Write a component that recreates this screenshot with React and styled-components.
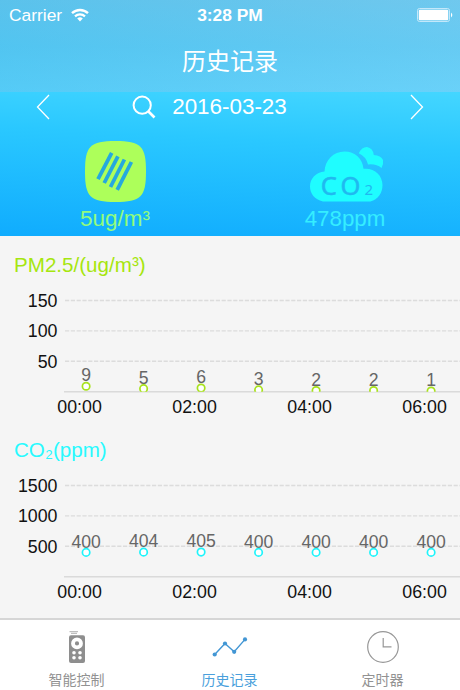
import React from "react";
import styled, { createGlobalStyle } from "styled-components";

const GlobalStyle = createGlobalStyle`
  * {
    box-sizing: border-box;
  }

  body {
    margin: 0;
    font-family: "Liberation Sans", "Noto Sans CJK SC", sans-serif;
  }

  svg {
    flex-shrink: 0;
  }
`;

const TIMES = ["00:00", "02:00", "04:00", "06:00"];

const PM_READINGS = [9, 5, 6, 3, 2, 2, 1];
const CO2_READINGS = [400, 404, 405, 400, 400, 400, 400];

const SearchIcon = () => (
  <svg width="24" height="24" viewBox="0 0 24 24" fill="none" stroke="#fff">
    <circle cx="10.2" cy="10.2" r="8.6" strokeWidth="2" />
    <path d="M16.5 16.5L22.5 22.5" strokeWidth="2.6" />
  </svg>
);

const Chevron = ({ points }) => (
  <svg width="14" height="26" viewBox="0 0 14 26" fill="none" stroke="#fff">
    <polyline points={points} strokeWidth="1.3" />
  </svg>
);

const WifiIcon = () => (
  <svg width="18" height="14" viewBox="0 0 18 14" fill="none" stroke="#fff">
    <path d="M1 5.2A11.6 11.6 0 0 1 17 5.2" strokeWidth="2.4" />
    <path d="M4 8.4A7.2 7.2 0 0 1 14 8.4" strokeWidth="2.2" />
    <path d="M9 13.6L6.2 10.6A4 4 0 0 1 11.8 10.6Z" fill="#fff" stroke="none" />
  </svg>
);

const BatteryIcon = () => (
  <svg width="36" height="14" viewBox="0 0 36 14">
    <rect x="0.5" y="0.5" width="32" height="13" rx="2" fill="none" stroke="#c4e8fa" />
    <rect x="1.8" y="1.8" width="29.4" height="10.4" rx="1" fill="#fff" />
    <path d="M34 4.6Q36.6 7 34 9.4Z" fill="#fff" />
  </svg>
);

const DustIcon = () => (
  <svg width="61" height="61" viewBox="0 0 61 61">
    <path
      d="M0 30.5C0 5 5 0 30.5 0S61 5 61 30.5S56 61 30.5 61S0 56 0 30.5Z"
      fill="#adff5a"
    />
    <g fill="none" stroke="#25a9de" strokeWidth="3.8">
      <path d="M26.7 11.8L13 38.2" />
      <path d="M32.9 15.3L19.2 42" />
      <path d="M39.4 18.5L25.5 46" />
      <path d="M46.4 21L32.2 48.8" />
    </g>
  </svg>
);

const CloudIcon = () => (
  <svg width="74" height="56" viewBox="0 0 74 56">
    <g fill="#1ffdff">
      <path d="M13 55.5C4.5 53.5 0 47.5 0 40.5C0 32.5 6 26.5 14.5 25.6C15 14 23.5 5.5 34.5 5.5C45 5.5 52.5 12.5 53.5 22.8C64 21.5 72.5 29 72.5 39C72.5 47 68 53.5 60.5 55.5Z" />
      <path d="M48.7 7.3Q52 0.8 57 1Q63 2 63.8 9Q71 9.5 73 14Q73.8 18 71.5 22Q66 17.5 58 18.5Q56 10.5 48.7 7.3Z" />
    </g>
    <g fill="#20b9f0" fontFamily="Noto Sans, sans-serif">
      <g fontSize="25.5" stroke="#20b9f0" strokeWidth="0.5">
        <text x="10.7" y="48.6">C</text>
        <text x="30.6" y="48.6">O</text>
      </g>
      <text x="54.5" y="48.6" fontSize="15">2</text>
    </g>
  </svg>
);

const RemoteIcon = () => (
  <svg width="34" height="34" viewBox="0 0 34 34">
    <path d="M9.5 1.7H18M11 3.3H17" stroke="#b0b0b0" />
    <rect x="9" y="5.3" width="16" height="27.7" rx="2" fill="#8e8e8e" />
    <circle cx="17" cy="13.4" r="4" fill="none" stroke="#fff" strokeWidth="3.8" />
    <g fill="#fff">
      <circle cx="14" cy="22.8" r="1.8" />
      <circle cx="20" cy="22.8" r="1.8" />
      <circle cx="14" cy="27.8" r="1.8" />
      <circle cx="20" cy="27.8" r="1.8" />
    </g>
  </svg>
);

const TrendIcon = () => (
  <svg width="36" height="34" viewBox="0 0 36 34">
    <polyline
      points="2.7,24.5 13,13.5 22.2,21.8 33,9.4"
      fill="none"
      stroke="#4296d4"
      strokeWidth="1.4"
    />
    <g fill="#4296d4">
      <circle cx="2.7" cy="24.5" r="2.1" />
      <circle cx="13" cy="13.5" r="2.1" />
      <circle cx="22.2" cy="21.8" r="2.1" />
      <circle cx="33" cy="9.4" r="2.1" />
    </g>
  </svg>
);

const ClockIcon = () => (
  <svg width="34" height="34" viewBox="0 0 34 34" fill="none" stroke="#979797">
    <circle cx="17" cy="17" r="15.3" strokeWidth="1.2" />
    <path d="M17.2 8V16.8H25.5" strokeWidth="1.2" />
  </svg>
);

/**
 * Renders one history chart: gridlines, markers, values and the time axis.
 * @param {Number[]} readings - hourly values
 * @param {Number} step - value between two gridlines
 * @param {String} color - marker colour
 * @param {String} id - id of the clip path that cuts markers at the axis
 */
const Chart = ({ readings, step, color, id }) => {
  const rowHeight = 30.4;
  const base = 101.7;
  const pointX = i => 86.1 + i * 57.5;
  const pointY = value => base - (value / step) * rowHeight;

  return (
    <ChartSvg viewBox="0 0 460 130">
      <clipPath id={id}>
        <rect x="0" y="0" width="460" height={base} />
      </clipPath>
      {[1, 2, 3].map(n => (
        <g key={n}>
          <GridLine x1="65" x2="460" y1={base - n * rowHeight} y2={base - n * rowHeight} />
          <AxisText x="57.5" y={base - n * rowHeight + 6.5} textAnchor="end">
            {n * step}
          </AxisText>
        </g>
      ))}
      <BaseLine x1="64" x2="460" y1={base} y2={base} />
      {readings.map((value, i) => (
        <ValueText key={i} x={pointX(i)} y={pointY(value) - 4.8} textAnchor="middle">
          {value}
        </ValueText>
      ))}
      <g clipPath={`url(#${id})`}>
        {readings.map((value, i) => (
          <Marker key={i} cx={pointX(i)} cy={pointY(value)} r="3.7" stroke={color} />
        ))}
      </g>
      {TIMES.map((time, i) => (
        <AxisText key={time} x={pointX(i * 2) - 6.5} y="122.6" textAnchor="middle">
          {time}
        </AxisText>
      ))}
    </ChartSvg>
  );
};

const App = () => (
  <Screen>
    <GlobalStyle />
    <Header>
      <StatusBar>
        <Carrier>
          Carrier <WifiIcon />
        </Carrier>
        <Clock>3:28 PM</Clock>
        <Battery>
          <BatteryIcon />
        </Battery>
      </StatusBar>
      <Title>历史记录</Title>
    </Header>
    <Hero>
      <DateBar>
        <Chevron points="13,1 1.5,13 13,25" />
        <DateLabel>
          <SearchIcon />
          2016-03-23
        </DateLabel>
        <Chevron points="1,1 12.5,13 1,25" />
      </DateBar>
      <Metrics>
        <Metric>
          <DustIcon />
          <MetricValue color="#93fc7c" size="22.5px">5ug/m³</MetricValue>
        </Metric>
        <Metric>
          <CloudSlot>
            <CloudIcon />
          </CloudSlot>
          <MetricValue color="#35edff" size="22.3px">478ppm</MetricValue>
        </Metric>
      </Metrics>
    </Hero>
    <History>
      <Section>
        <SectionTitle color="#a6e60f">PM2.5/(ug/m³)</SectionTitle>
        <Chart id="pm" readings={PM_READINGS} step={50} color="#a8e21c" />
      </Section>
      <Section>
        <SectionTitle color="#28faff">CO₂(ppm)</SectionTitle>
        <Chart id="co2" readings={CO2_READINGS} step={500} color="#1ff4fb" />
      </Section>
    </History>
    <TabBar>
      <Tab>
        <RemoteIcon />
        智能控制
      </Tab>
      <Tab $active>
        <TrendIcon />
        历史记录
      </Tab>
      <Tab>
        <ClockIcon />
        定时器
      </Tab>
    </TabBar>
  </Screen>
);

const Screen = styled.div`
  display: flex;
  flex-direction: column;
  width: 460px;
  height: 690px;
  overflow: hidden;
  background: #f5f5f5;
`;

const Header = styled.header`
  height: 92px;
  color: #fff;
  background: linear-gradient(to right, rgba(60, 190, 238, 0.35), rgba(120, 208, 245, 0.35)),
    linear-gradient(#6bc4ea 0%, #5dc8f2 50%, #62d2fb 100%);
`;

const StatusBar = styled.div`
  display: grid;
  grid-template-columns: 1fr auto 1fr;
  align-items: center;
  height: 30px;
  padding: 0 7px 0 9px;
  font-size: 17.4px;
`;

const Carrier = styled.div`
  display: flex;
  align-items: center;
  gap: 9px;
`;

const Clock = styled.div`
  margin-right: 2px;
  font-weight: bold;
`;

const Battery = styled.div`
  display: flex;
  justify-content: flex-end;
`;

const Title = styled.h1`
  margin: 0;
  font-size: 24px;
  font-weight: 400;
  line-height: 64px;
  text-align: center;
`;

const Hero = styled.section`
  height: 144px;
  background: linear-gradient(183deg, #44d6ff 0%, #2ac8ff 35%, #10acfe 100%);
`;

const DateBar = styled.div`
  display: flex;
  align-items: center;
  justify-content: space-between;
  height: 30px;
  padding: 0 36px;
  color: #fff;
`;

const DateLabel = styled.div`
  display: flex;
  align-items: center;
  gap: 16px;
  margin-right: 41px;
  font-size: 22.4px;
`;

const Metrics = styled.div`
  display: grid;
  grid-template-columns: 1fr 1fr;
  padding-top: 18px;
`;

const Metric = styled.div`
  display: flex;
  flex-direction: column;
  align-items: center;
  justify-content: flex-end;
  height: 93px;
`;

const CloudSlot = styled.div`
  display: flex;
  padding-left: 4px;
`;

const MetricValue = styled.div`
  color: ${props => props.color};
  font-size: ${props => props.size};
  line-height: 29px;
  margin-top: 2px;
`;

const History = styled.main`
  flex: 1;
`;

const Section = styled.section`
  height: 184.6px;
`;

const SectionTitle = styled.h2`
  margin: 0;
  padding: 14px 14px 0;
  height: 54px;
  color: ${props => props.color};
  font-size: 20.6px;
  font-weight: 400;
  line-height: 30px;
`;

const ChartSvg = styled.svg`
  display: block;
  width: 460px;
  height: 130px;
`;

const GridLine = styled.line`
  stroke: #dcdcdc;
  stroke-width: 1.4;
  stroke-dasharray: 4.2 1.6;
`;

const BaseLine = styled.line`
  stroke: #dadada;
  stroke-width: 1.4;
`;

const AxisText = styled.text`
  fill: #111;
  font-size: 17.8px;
`;

const ValueText = styled.text`
  fill: #666;
  font-size: 17.6px;
`;

const Marker = styled.circle`
  fill: #fff;
  stroke-width: 1.7;
`;

const TabBar = styled.nav`
  display: grid;
  grid-template-columns: repeat(3, 1fr);
  height: 72px;
  padding-right: 1px;
  border-top: 2px solid #d6d6d6;
  background: #fff;
`;

const Tab = styled.div`
  display: flex;
  flex-direction: column;
  align-items: center;
  padding-top: 10px;
  color: ${props => (props.$active ? "#4a9fdc" : "#929292")};
  font-size: 14px;
  line-height: 32px;
`;

export default App;
